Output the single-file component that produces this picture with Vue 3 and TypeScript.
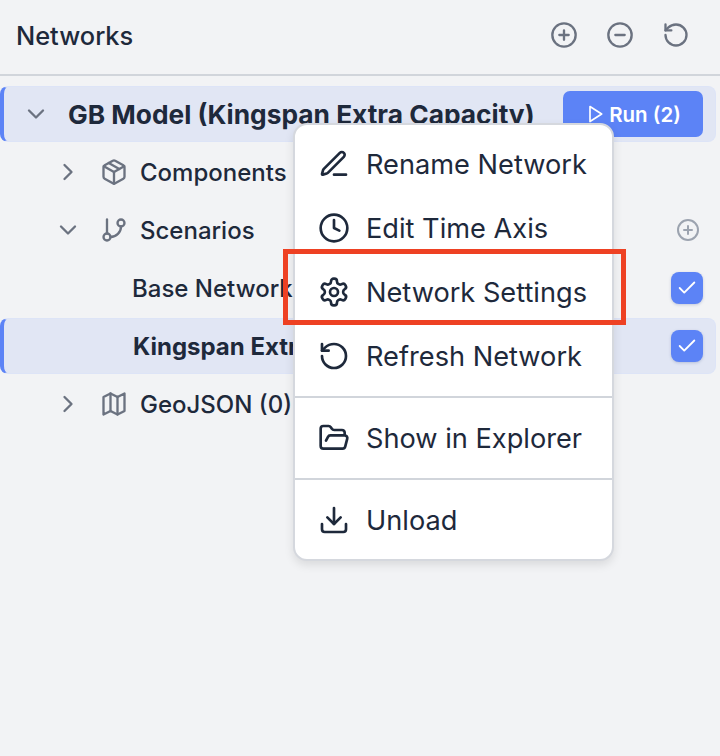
<script setup lang="ts">
const menuGroups: { label: string; icon: string }[][] = [
  [
    { label: 'Rename Network', icon: 'pen' },
    { label: 'Edit Time Axis', icon: 'clock' },
    { label: 'Network Settings', icon: 'gear' },
    { label: 'Refresh Network', icon: 'refresh' },
  ],
  [{ label: 'Show in Explorer', icon: 'folder' }],
  [{ label: 'Unload', icon: 'download' }],
]
</script>

<template>
  <div class="page">
    <header class="header">
      <h1 class="title">Networks</h1>
      <div class="tools">
        <svg class="tool" viewBox="0 0 24 24"><circle cx="12" cy="12" r="10" /><path d="M8 12h8M12 8v8" /></svg>
        <svg class="tool" viewBox="0 0 24 24"><circle cx="12" cy="12" r="10" /><path d="M8 12h8" /></svg>
        <svg class="tool" viewBox="0 0 24 24"><path d="M3 12a9 9 0 1 0 9-9 9.75 9.75 0 0 0-6.74 2.74L3 8" /><path d="M3 3v5h5" /></svg>
      </div>
    </header>

    <div class="tree">
      <div class="row active root-row">
        <svg class="chev" viewBox="0 0 24 24"><path d="m6 9 6 6 6-6" /></svg>
        <span class="root-name">GB Model (Kingspan Extra Capacity)</span>
        <button class="run">
          <svg class="play" viewBox="0 0 24 24"><polygon points="6 3 20 12 6 21" /></svg>
          Run (2)
        </button>
      </div>

      <div class="row branch">
        <svg class="chev" viewBox="0 0 24 24"><path d="m9 18 6-6-6-6" /></svg>
        <svg class="node-icon" viewBox="0 0 24 24">
          <path d="M11 21.73a2 2 0 0 0 2 0l7-4A2 2 0 0 0 21 16V8a2 2 0 0 0-1-1.73l-7-4a2 2 0 0 0-2 0l-7 4A2 2 0 0 0 3 8v8a2 2 0 0 0 1 1.73z" />
          <path d="M12 22V12" /><path d="M3.29 7 12 12l8.71-5" /><path d="m7.5 4.27 9 5.15" />
        </svg>
        <span class="label">Components</span>
      </div>

      <div class="row branch">
        <svg class="chev" viewBox="0 0 24 24"><path d="m6 9 6 6 6-6" /></svg>
        <svg class="node-icon" viewBox="0 0 24 24">
          <path d="M6 3v12" /><circle cx="18" cy="6" r="3" /><circle cx="6" cy="18" r="3" /><path d="M18 9a9 9 0 0 1-9 9" />
        </svg>
        <span class="label">Scenarios</span>
        <svg class="add" viewBox="0 0 24 24"><circle cx="12" cy="12" r="10" /><path d="M8 12h8M12 8v8" /></svg>
      </div>

      <div class="row leaf">
        <span class="label">Base Network</span>
        <span class="check"><svg viewBox="0 0 24 24"><path d="M20 6 9 17l-5-5" /></svg></span>
      </div>

      <div class="row leaf active">
        <span class="label strong">Kingspan Extra Capacity</span>
        <span class="check"><svg viewBox="0 0 24 24"><path d="M20 6 9 17l-5-5" /></svg></span>
      </div>

      <div class="row branch">
        <svg class="chev" viewBox="0 0 24 24"><path d="m9 18 6-6-6-6" /></svg>
        <svg class="node-icon" viewBox="0 0 24 24">
          <path d="M3 6l6-3 6 3 6-3v15l-6 3-6-3-6 3z" /><path d="M9 3v15M15 6v15" />
        </svg>
        <span class="label">GeoJSON (0)</span>
      </div>
    </div>

    <div class="menu">
      <div v-for="(group, g) in menuGroups" :key="g" class="group">
        <div v-for="item in group" :key="item.label" class="item">
          <svg class="item-icon" viewBox="0 0 24 24">
            <template v-if="item.icon === 'pen'">
              <path d="M12 20h9" />
              <path d="M16.376 3.622a1 1 0 0 1 3.002 3.002L7.368 18.635a2 2 0 0 1-.855.506l-2.872.838a.5.5 0 0 1-.62-.62l.838-2.872a2 2 0 0 1 .506-.854z" />
            </template>
            <template v-else-if="item.icon === 'clock'">
              <circle cx="12" cy="12" r="10" /><path d="M12 6v6l4 2" />
            </template>
            <template v-else-if="item.icon === 'gear'">
              <path d="M12.22 2h-.44a2 2 0 0 0-2 2v.18a2 2 0 0 1-1 1.73l-.43.25a2 2 0 0 1-2 0l-.15-.08a2 2 0 0 0-2.73.73l-.22.38a2 2 0 0 0 .73 2.73l.15.1a2 2 0 0 1 1 1.72v.51a2 2 0 0 1-1 1.74l-.15.09a2 2 0 0 0-.73 2.73l.22.38a2 2 0 0 0 2.73.73l.15-.08a2 2 0 0 1 2 0l.43.25a2 2 0 0 1 1 1.73V20a2 2 0 0 0 2 2h.44a2 2 0 0 0 2-2v-.18a2 2 0 0 1 1-1.73l.43-.25a2 2 0 0 1 2 0l.15.08a2 2 0 0 0 2.73-.73l.22-.39a2 2 0 0 0-.73-2.73l-.15-.08a2 2 0 0 1-1-1.74v-.5a2 2 0 0 1 1-1.74l.15-.09a2 2 0 0 0 .73-2.73l-.22-.38a2 2 0 0 0-2.73-.73l-.15.08a2 2 0 0 1-2 0l-.43-.25a2 2 0 0 1-1-1.73V4a2 2 0 0 0-2-2z" />
              <circle cx="12" cy="12" r="3" />
            </template>
            <template v-else-if="item.icon === 'refresh'">
              <path d="M3 12a9 9 0 1 0 9-9 9.75 9.75 0 0 0-6.74 2.74L3 8" /><path d="M3 3v5h5" />
            </template>
            <template v-else-if="item.icon === 'folder'">
              <path d="m6 14 1.5-2.9A2 2 0 0 1 9.24 10H20a2 2 0 0 1 1.94 2.5l-1.54 6a2 2 0 0 1-1.95 1.5H4a2 2 0 0 1-2-2V5a2 2 0 0 1 2-2h3.9a2 2 0 0 1 1.69.9l.81 1.2a2 2 0 0 0 1.67.9H18a2 2 0 0 1 2 2v2" />
            </template>
            <template v-else>
              <path d="M21 15v4a2 2 0 0 1-2 2H5a2 2 0 0 1-2-2v-4" /><path d="m7 10 5 5 5-5" /><path d="M12 15V3" />
            </template>
          </svg>
          <span>{{ item.label }}</span>
        </div>
      </div>
    </div>

    <div class="highlight"></div>
  </div>
</template>

<style scoped>
.page {
  position: relative;
  width: 720px;
  height: 756px;
  overflow: hidden;
  background: #f2f3f5;
  font-family: Inter, "Liberation Sans", sans-serif;
  color: #1e293b;
}
svg {
  fill: none;
  stroke: currentColor;
  stroke-width: 2;
  stroke-linecap: round;
  stroke-linejoin: round;
  flex: none;
}
.header {
  height: 76px;
  box-sizing: border-box;
  border-bottom: 2px solid #d1d5db;
  display: flex;
  align-items: center;
  justify-content: space-between;
  padding: 0 30px 4px 16px;
}
.title {
  margin: 0;
  font-size: 25.4px;
  font-weight: 500;
}
.tools {
  display: flex;
  gap: 28px;
  color: #6b7280;
}
.tool {
  width: 28px;
  height: 28px;
}
.tree {
  display: flex;
  flex-direction: column;
  gap: 2px;
  padding: 10px 4px 0 0;
}
.row {
  height: 56px;
  box-sizing: border-box;
  display: flex;
  align-items: center;
  white-space: nowrap;
}
.active {
  background: #e1e6f4;
  border: 1px solid #dde4f7;
  border-left: 4px solid #5c83f6;
  border-radius: 8px;
}
.root-row {
  padding: 0 12px 0 18px;
}
.chev {
  width: 28px;
  height: 28px;
  color: #6b7280;
}
.root-name {
  margin-left: 18px;
  font-size: 26.3px;
  font-weight: 700;
}
.run {
  margin-left: auto;
  width: 140px;
  height: 46px;
  border: 0;
  border-radius: 7px;
  background: #5c83f6;
  color: #fff;
  font: 600 20.5px Inter, "Liberation Sans", sans-serif;
  display: flex;
  align-items: center;
  justify-content: center;
  gap: 4px;
  flex: none;
}
.play {
  width: 20px;
  height: 20px;
}
.branch {
  padding: 0 16px 0 54px;
}
.node-icon {
  width: 28px;
  height: 28px;
  margin-left: 18px;
  color: #6b7280;
}
.label {
  font-size: 24px;
  font-weight: 500;
}
.branch .label {
  margin-left: 12px;
}
.strong {
  font-weight: 700;
}
.add {
  margin-left: auto;
  width: 24px;
  height: 24px;
  color: #9ca3af;
}
.leaf {
  padding: 0 13px 0 132px;
  justify-content: space-between;
}
.leaf.active {
  padding: 0 12px 0 129px;
}
.check {
  width: 32px;
  height: 32px;
  border-radius: 8px;
  background: #5c83f6;
  color: #fff;
  display: flex;
  align-items: center;
  justify-content: center;
  box-shadow: 0 1px 3px rgba(60, 80, 140, 0.25);
}
.check svg {
  width: 22px;
  height: 22px;
}
.menu {
  position: absolute;
  left: 293px;
  top: 123px;
  width: 321px;
  box-sizing: border-box;
  background: #fff;
  border: 2px solid #d5d8de;
  border-radius: 14px;
  box-shadow: 0 4px 10px rgba(0, 0, 0, 0.1);
}
.group {
  padding: 8px 0;
}
.group:first-child {
  padding-top: 7px;
}
.group:last-child {
  padding-bottom: 7px;
}
.group + .group {
  border-top: 2px solid #d1d5db;
}
.item {
  height: 64px;
  display: flex;
  align-items: center;
  gap: 16px;
  padding-left: 23px;
  font-size: 27.2px;
}
.item-icon {
  width: 32px;
  height: 32px;
}
.highlight {
  position: absolute;
  left: 283px;
  top: 249px;
  width: 343px;
  height: 76px;
  box-sizing: border-box;
  border: 5px solid #ee4123;
}
</style>
